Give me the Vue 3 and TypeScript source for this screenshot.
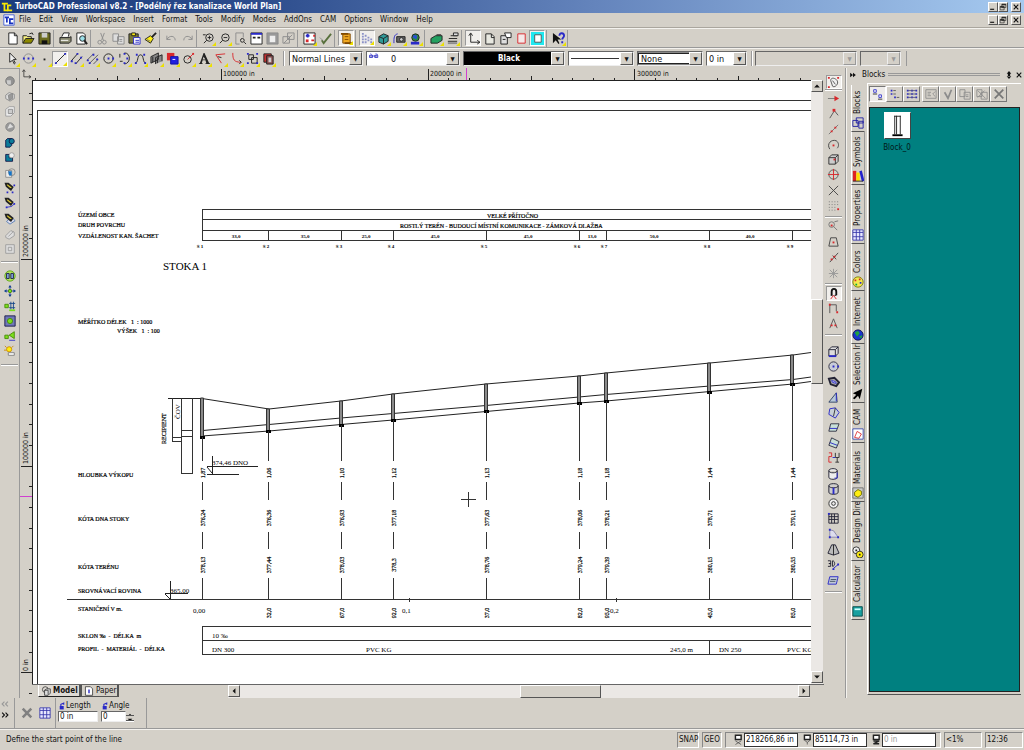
<script setup lang="ts">
import { h, ref } from 'vue'

type Shape = [d: string, stroke: string, fill?: string, width?: number]
interface Tool { id: string; fly?: boolean; on?: boolean }

const K = '#222'
const B = '#2a2ac8'
const R = '#d8282c'
const Y = '#ffee10'
const G = '#8c8c8c'
const T = '#0b7c9a'
const L = '#7be01e'
const N = 'none'

const circle = (x: number, y: number, r: number) =>
  `M${x - r} ${y}a${r} ${r} 0 1 0 ${2 * r} 0a${r} ${r} 0 1 0 ${-2 * r} 0`
const dots = (...p: number[]) => {
  let d = ''
  for (let i = 0; i < p.length; i += 2) d += `M${p[i] - 1} ${p[i + 1] - 1}h2v2h-2z`
  return d
}
const cube = 'M2 5l3-3h7v7l-3 3H2zM2 5h7v7M9 5l3-3'

const icons: Record<string, Shape[]> = {
  logo: [['M1 3h7M4 3v8h4', '#f6e800', N, 2], ['M12 5H8v6h5', '#f6e800', N, 2]],
  doc: [['M1 1h12v12H1z', '#3a58d8', '#fff'], ['M2 4h5M4.500 4v6', '#1730c0', N, 2], ['M12 6H8v5h4', '#1730c0', N, 2]],
  new: [['M3 1h6l3 3v9H3z', K, '#fff'], ['M9 1v3h3', K]],
  open: [['M1 12V4h4l1 1h4v3', K, '#f8f080'], ['M1 12l3-5h9l-3 5z', K, '#8c8800'], ['M8 2l3-1 1 2', K]],
  save: [['M1 1h12v12H1z', K, '#6b6b20'], ['M4 1h6v5H4z', N, '#ccc'], ['M4 9h6v4H4z', N, '#111']],
  print: [['M3 5l2-4h6l-1 4', K, '#fff'], ['M1 6h10l2-1v5l-2 2H1z', K, '#8a8a70'], ['M2 9h8', '#fff']],
  preview: [['M2 1h7l2 2v10H2z', K, '#fff'], [circle(8, 7, 3), K, '#9de0e8'], ['M10 9l3 4', K, N, 2]],
  cut: [['M5 1l3 8M9 1L6 9', G], [circle(4, 11, 2), G], [circle(9, 11, 2), G]],
  copy: [['M1 2h6v8H1zM6 5h7v8H6z', G, '#ddd'], ['M8 8h3M8 10h3', G]],
  paste: [['M1 2h10v10H1z', K, '#77773a'], ['M4 1h4v3H4z', K, Y], ['M6 6h7v7H6z', B, '#fff'], ['M8 9h4M8 11h4', B]],
  brush: [['M13 1L8 6', K, N, 2], ['M7 4l3 3-3 5-6-4z', K, Y], ['M3 8l4 2', '#777']],
  undo: [['M2 4v4h4M2 8c3-5 9-4 9 1', G]],
  redo: [['M12 4v4H8M12 8C9 3 3 4 3 9', G]],
  zin: [[circle(8, 6, 4), K], ['M6 6h4M8 4v4M5 9l-3 3', K], ['M1 3h3', K]],
  zout: [[circle(8, 6, 4), K], ['M6 6h4M5 9l-3 3', K]],
  zwin: [['M10 6V1H2v12h4', G], [circle(9, 9, 2), K], ['M11 11l2 2', K]],
  zext: [['M1 1h12v12H1z', K, '#fff'], ['M1 2h12', B, N, 2], ['M3 6h3M8 6h3', K, N, 2]],
  zpage: [['M1 1h12v12H1z', G, '#999'], ['M4 4h6v7H4z', N, '#eee']],
  zsel: [['M6 1h7v7H6zM1 5h7v7H1z', G], ['M2 12l9-9', G]],
  cam1: [['M1 1h12v12H1z', K, '#fff'], ['M3 4h4M5 2v4', B, N, 2], ['M3 8h3v3H3z', N, R], ['M11 4h2M9 9h3', R, N, 2]],
  pick: [['M3 9l2 3 8-10', '#58703c', N, 2], ['M1 6l3 3', G]],
  scroll: [['M3 2h8v10H3z', '#804800', '#f0a820'], ['M1 2h8M5 12h8', '#804800', N, 2], ['M5 5h4M5 8h4', '#804800']],
  grid: [[dots(2, 2, 5, 4, 8, 6, 2, 5, 2, 8, 5, 8, 8, 9, 2, 11, 5, 11, 11, 8, 11, 11), N, '#8c92c8']],
  box3: [['M2 5l5-3 5 2v6l-5 3-5-2z', K, '#2f9a98'], ['M2 5l5 2 5-3M7 7v6', K]],
  camera: [['M1 12C1 6 1 3 5 2', B], ['M4 5h9v6H4z', K, '#666'], [circle(9, 8, 2), K, '#ccc']],
  globe: [[circle(7, 6, 4), K, '#2a8a3c'], ['M5 3l4 1-1 4-4-2z', N, '#2a50d0'], ['M2 12h9', B, N, 3]],
  render: [['M1 7l5-3h7v5l-5 3H1z', K, '#24a060'], ['M7 3h5', K]],
  stack: [['M2 10h10M3 7h9M5 4h7', K, N, 1], ['M2 12h10', G, N, 2], ['M8 1h5v3H8z', K, '#ddd']],
  axes: [['M4 2v9h9', K], ['M2 4l2-3 2 3M11 9l3 2-3 2', K]],
  sheet: [['M3 2h6l3 3v8H3z', K, '#e8e8e0'], ['M9 2v4h3', K]],
  props: [['M2 4h7v9H2z', K, '#ddd'], ['M6 1h7v5H8z', K, '#fff'], ['M4 8h3', K]],
  redbox: [['M3 2h8v10H3z', R, '#f4e8e8']],
  cyanbox: [['M0 0h14v14H0z', N, '#20e8f0'], ['M4 3h7v8H4z', '#555', '#fff']],
  help: [['M1 1v11l3-3 3 4 1-1-2-4h4z', N, '#111'], ['M8 4c0-4 5-3 5 0 0 2-2 2-2 4M11 10v2', B, N, 2]],
  arrow: [['M4 1v10l3-2 2 4 1-1-2-4h3z', K, '#eee']],
  circ: [[circle(7, 7, 5), G], [dots(2, 7, 7, 7, 12, 7), N, B]],
  point: [[dots(7, 8), N, K]],
  line: [['M2 12L12 2', K], [dots(2, 12, 12, 2), N, B]],
  dline: [['M1 10L8 2M6 13l7-8', K], [dots(2, 10, 8, 2, 6, 12, 12, 6), N, B]],
  mline: [['M1 9l7-7M4 12l9-9M8 13l5-5', '#555'], [dots(2, 9, 8, 3, 12, 8, 4, 12), N, B]],
  ccirc: [[circle(7, 7, 5), K], [dots(7, 7, 12, 7), N, B]],
  arcs: [['M7 1c7 0 7 11 0 12', K], ['M2 2v4M2 10h3', K], [dots(7, 2, 10, 7, 7, 12), N, B]],
  curve: [['M1 12C5 12 3 3 7 3s2 9 6 9', K], [dots(2, 12, 3, 3, 11, 3, 12, 12), N, B]],
  walls: [['M1 12V5l8-4v7zM6 13V6l7-3v7', K, '#888'], ['M3 11V5M8 12V6', K]],
  insert: [['M1 1h8v8H1z', N, R], ['M5 5h8v8H5z', '#1010a0', '#2020e0'], ['M7 8h3', '#fff']],
  dim: [[circle(6, 8, 4), K], ['M6 8l6-6', R], [dots(12, 2), N, R]],
  text: [['M7 1l5 11h1v1H8v-1h1l-1-3H5l-1 3h1v1H1v-1h1L6 1zM6 5L5 8h3z', N, K]],
  corner: [['M12 2L2 3l6 9', R], ['M4 5l4 1', K]],
  fillet: [['M3 1c0 7 1 10 9 10', R], ['M10 9l2 2-2 2', K]],
  group: [['M3 3h5v5H3zM6 6h6v6H6z', K], [dots(2, 2, 12, 2, 2, 12, 12, 12), N, B]],
  bool: [['M2 2h8v9H2z', K, '#c43030'], ['M5 4h7v9H5z', K, '#8a5050'], ['M7 6h3v5H7z', N, '#ccc']],
  g1: [[circle(7, 7, 5), '#777', '#929292'], ['M3 6h5v5H4z', N, '#ccc']],
  g2: [['M2 6l4-3 6 2v5l-5 3-5-3z', '#888', '#ddd'], ['M5 6l5-2v6l-4 2z', '#888', '#999']],
  g3: [['M2 5l4-3h6v7l-4 4H2z', '#999', '#eee'], ['M5 5h5v5H5z', '#888', '#ccc']],
  g4: [[circle(7, 7, 5), '#888', '#999'], ['M4 9l3-6 4 4z', N, '#ddd']],
  add: [['M2 5l2-2h5v8l-2 2H2z', '#114', T], [circle(9, 6, 3), '#114', T]],
  sub: [['M2 4h4v4h4v4H2z', '#114', T], [circle(9, 5, 3), '#999', '#eee']],
  isec: [['M2 4h7v8H2z', '#888', '#eee'], [circle(9, 6, 4), '#888', N], ['M5 5h4v5H6z', N, '#1474c8']],
  pen1: [['M2 2h3l5 4-2 3-5-4z', K, '#d8c430', 2], [dots(12, 4, 4, 12, 10, 12), N, B]],
  pen2: [['M2 2h3l5 4-2 3-5-4z', K, '#d8c430', 2], ['M3 12l6-1 3-3', B], [dots(3, 12, 12, 8), N, B]],
  pen3: [['M5 8l-2 2 4 3 6-4-4-4', '#5078b0', '#dde'], ['M2 2h3l5 4-2 3-5-4z', K, '#d8c430', 2]],
  shade: [['M2 9l6-6 4 2v4l-6 4-4-2zM5 10l6-6', '#999', '#ddd']],
  off: [['M2 2h10v10H2zM5 5h4v4H5z', '#999', '#ddd']],
  n1: [[circle(7, 7, 6), '#58a010', '#b8e860'], ['M3 4h3v6H3zM8 4h3v6H8z', '#114', '#88a8e0']],
  n2: [['M7 1v12M1 7h12', B], ['M7 0l2 3H5zM7 14l2-3H5zM0 7l3-2v4zM14 7l-3-2v4z', N, '#148'], [circle(7, 7, 2), '#480', L]],
  n3: [['M6 4h7M6 9h7M8 2v9M11 2v9', '#148'], ['M1 5h4v4H1z', '#480', L], ['M6 12h7', L, N, 2]],
  n4: [['M1 1h12v12H1z', '#114', '#7078b8'], [circle(7, 7, 3), '#480', L]],
  n5: [['M1 6h4v4H1zM6 6l6-4v8z', '#480', L], ['M6 12h7', B, N, 1]],
  n6: [[circle(6, 5, 3), '#c80', Y], ['M1 1l2 2M11 1L9 3M0 6h3', '#c80'], ['M5 9h7v3H5z', '#777', '#fff']],
  nosnap: [['M4 5c0-4 5-3 7 0 2 4-3 8-5 6z', '#555', '#eee'], ['M6 5l3 4', '#555'], [dots(2, 2, 12, 2, 2, 12), N, R]],
  snap1: [['M1 7h9', '#777'], ['M8 4l5 3-5 3z', N, R]],
  snap2: [['M3 12L8 4l4 5', '#555'], ['M6 2h3v3H6z', N, R]],
  snap3: [['M2 12L12 2', '#777'], [dots(5, 9, 9, 5), N, R]],
  snap4: [['M3 12C-1 6 5 1 10 3c3 2 3 6 1 8', '#444'], [dots(7, 8), N, R]],
  snap5: [[cube, '#333', '#ccc'], [dots(8, 7), N, R]],
  snap6: [[circle(7, 7, 5), '#555'], ['M7 1v12M1 7h12', R]],
  snap7: [['M2 2l10 10M12 2L2 12', '#444']],
  snap8: [['M2 3h1M5 3h1M8 3h1M11 3h1M2 6h1M5 6h1M8 6h1M11 6h1M2 9h1M5 9h1M8 9h1M2 12h1M5 12h1M8 12h1', '#777'], [dots(12, 11), N, R]],
  snap9: [[circle(5, 6, 3), '#777'], ['M7 8l4 4M8 3l4-1', '#777'], [dots(5, 7), N, R]],
  snap10: [['M4 3h6l2 9H2z', '#444'], [dots(7, 8), N, R]],
  snap11: [['M3 12L12 2M6 5l4 4', '#444'], [dots(5, 9, 8, 6), N, R]],
  snap12: [['M7 2v10M2 7h10M3 3l8 8M11 3l-8 8', '#999']],
  magnet: [['M4 9h2M8 9h2', '#111', N, 1], ['M5 9V5c0-4 5-4 5 0v4', '#111', N, 2], ['M7 9l-3 4M7 9l3 4', R]],
  ort: [['M3 2v10M3 3h7v7', '#555'], [dots(3, 3, 11, 11), N, R]],
  comp: [['M7 2L3 12M7 2l4 10', '#555'], [dots(5, 9, 9, 9), N, R]],
  box: [[cube, '#223', '#ddd'], ['M2 12h8', B, N, 2]],
  sphere: [[circle(7, 7, 5), '#334', '#c8ccd8'], [dots(7, 7, 12, 7), N, B]],
  torus: [['M2 4l6-1 5 5-3 4-6-2z', '#223', '#aaa', 2], ['M5 6l4 1 1 2-4-1z', B, '#fff']],
  cone: [['M10 2L2 12h9z', '#346', '#b8c8d8'], ['M10 2v9', B]],
  poly: [['M3 3l6-1 4 5-4 6-7-4z', B, '#c8d0d8'], ['M9 2L7 11', '#333']],
  ext: [['M4 3h9L10 11H2z', '#334', '#c8e0d8'], ['M3 8h8', B]],
  ext2: [['M5 2l8 4-3 7-8-3z', '#334', '#c8e0d8'], ['M3 7l8 3', B]],
  lathe: [['M2 2h3v4H2v6h3', R], ['M9 2v5M13 2v5H9M11 7v5M9 12h4', '#333'], ['M6 7h3', B]],
  cyl: [['M2 4c0-3 9-3 9 0v7c0 3-9 3-9 0zM2 4c0 3 9 3 9 0', '#223', '#eee'], ['M11 6v6H8', B]],
  cyl2: [['M2 4c0-3 10-3 10 0v7c0 3-10 3-10 0zM2 4c0 3 10 3 10 0', '#223', '#ccc'], ['M7 6v7', B, N, 2]],
  ring: [[circle(7, 7, 5), '#333', '#eee'], [circle(7, 7, 2), '#333']],
  mesh: [['M2 2h10v10H2zM2 5h10M2 8h10M5 2v10M8 2v10', '#223'], [dots(2, 2), N, B]],
  tri: [['M3 3v8h9L7 4z', '#88a', '#dde'], [dots(3, 3, 3, 11, 12, 11), N, B]],
  prism: [['M5 2h4l4 9-6 2-6-2z', '#223', '#bbb'], ['M7 2v11', K]],
  threeD: [['M1 3h3v3H2h2v3H1M6 3v6c3 0 3-6 0-6', '#223'], ['M6 12l6-5', B], [dots(12, 7, 7, 12), N, B]],
  last: [['M3 4h9l-2 8H1z', B, '#c0c8d8'], ['M4 7h6M3 9h6', '#456']],
  blocks: [['M1 4h6v7H1zM5 1h8v6H5zM8 5h5v8H8z', '#1818a0', N]],
  symbols: [['M1 1h4v12H1z', N, '#d22'], ['M5 3h4v10H5z', N, '#fd0'], ['M10 1l3 12', '#22c', N, 3], ['M1 13h12', K]],
  table: [['M1 1h12v12H1zM1 4h12M5 1v12M9 1v12M1 9h12', '#3434a8', '#e8e8ff']],
  palette: [[circle(7, 7, 6), '#770', '#f4e850'], [dots(4, 5, 9, 4), N, R], [dots(5, 10), N, '#0a4'], [dots(10, 8), N, B]],
  earth: [[circle(7, 7, 6), '#114', '#1834d0'], ['M3 4l4-2 2 3-3 4zM8 9l4-2-1 4z', N, '#20a040']],
  cursor: [['M12 1L1 6l4 2-4 4 2 1 4-4 2 4z', N, '#000']],
  camtab: [['M1 1h12v12H1z', '#34a', '#fff'], ['M3 11l3-7 5 3-3 5z', R]],
  mat: [['M1 1h12v12H1z', '#666', '#ccc'], ['M3 6l4-3 4 2v4l-4 3-4-2z', '#660', Y]],
  design: [[circle(5, 5, 4), K, '#eee'], [circle(9, 10, 4), K, Y], [dots(5, 5, 9, 10), N, K]],
  calc: [['M1 2h11v11H1z', '#044', '#18a0a0'], ['M3 4h7v2H3z', N, '#cff']],
  bv1: [['M2 2h3v3H2zM8 8h3v3H8z', B, '#fff'], ['M1 7h5M7 13h5', K]],
  bv2: [[dots(3, 3, 3, 7, 7, 11), N, B], ['M5 3h3M5 7h3M9 11h3', '#555']],
  bv3: [[dots(2, 3, 7, 3, 12, 3, 2, 7, 7, 7, 12, 7, 2, 11, 7, 11, 12, 11), N, B], ['M2 3h10M2 7h10M2 11h10', '#558']],
  bb1: [['M1 2h12v10H1zM3 5h4M3 7h3M3 9h4M12 4L9 7l3 3', G]],
  bb2: [['M3 5l4 7 4-10', G, N, 2]],
  bb3: [['M1 2h6v8H1zM6 5h7v8H6zM8 8h3M8 10h3', G]],
  bb4: [['M1 2h6v8H1zM6 5h7v8H6z', G], ['M2 3l9 9M10 3l-8 8', G, N, 1]],
  bb5: [['M2 2l10 10M12 2L2 12', '#777', N, 2]],
  cross: [['M2 2l10 10M12 2L2 12', '#808080', N, 3]],
  lock: [['M3 7h7v6H3z', N, B], ['M5 8V4l5-2v3', B, N, 2]],
  model: [[circle(6, 5, 4), K], ['M5 6l3-2h5v6l-3 3H5z', K, '#ddd'], ['M5 6h5v6', K]],
  paper: [['M2 1h7l3 3v9H2z', K, '#fff'], ['M7 5v5', B, N, 2]],
  min: [['M2 11h7', '#111', N, 2]],
  rest: [['M5 2h7v6H5zM2 6h7v6H2z', '#111', '#d4d0c8'], ['M5 3h7M2 7h7', '#111', N, 2]],
  close: [['M3 3l8 8M11 3l-8 8', '#111', N, 2]],
  up: [['M3 9l4-4 4 4z', N, '#111']],
  down: [['M3 5l4 4 4-4z', N, '#111']],
  left: [['M9 3L5 7l4 4z', N, '#111']],
  right: [['M5 3l4 4-4 4z', N, '#111']],
  dright: [['M2 3l5 4-5 4zM7 3l5 4-5 4z', N, '#111']],
  updown: [['M7 0l4 5H3zM7 14l4-5H3zM5 4h4v6H5z', N, '#111']],
  chr: [['M2 3l4 4-4 4M8 3l4 4-4 4', '#111', N, 2]],
  chl: [['M6 3L2 7l4 4M12 3L8 7l4 4', '#999', N, 2]],
  px: [['M2 1h8v6H2z', K, '#fff', 2], ['M2 9l8 5M10 9l-8 5', '#444']],
  py: [['M2 1h8v6H2z', K, '#fff', 2], ['M2 8l4 3 4-3M6 11v3', '#444']],
  pz: [['M2 1h8v6H2z', K, '#fff', 2], ['M2 9h8l-8 4h8', K, N, 2]],
}

const Icon = (p: { name: string }) =>
  h('svg', { class: 'ico', viewBox: '0 0 14 14', 'aria-hidden': 'true' },
    icons[p.name].map(([d, stroke, fill, width]) =>
      h('path', { d, stroke, fill: fill ?? N, 'stroke-width': width ?? 1 })))
Icon.props = ['name']

const parse = (s: string): Tool[] =>
  s.split(' ').map(t => ({ id: t.replace(/[+!]/g, ''), fly: t.includes('+'), on: t.includes('!') }))

const menus = ['File', 'Edit', 'View', 'Workspace', 'Insert', 'Format', 'Tools', 'Modify', 'Modes', 'AddOns', 'CAM', 'Options', 'Window', 'Help']
const standard = [
  'new open save', 'print preview', 'cut copy paste brush', 'undo redo', 'zin+ zout+ zwin zext zpage zsel',
  'cam1+ pick', 'scroll+!', 'grid+! box3+ camera+ globe+', 'render+ stack+', 'axes! sheet props redbox cyanbox!', 'help+',
].map(parse)
const drawing = parse('arrow+ circ+ point+ line+! dline+ mline+ ccirc+ arcs+ curve+ walls+ insert+ dim+ text+ corner+ fillet+ group+ bool+')
const leftTools = ['g1 g2 g3 g4 add sub isec pen1 pen2 pen3 shade off', 'n1 n2 n3 n4 n5 n6'].map(parse)
const snapTools = [
  'nosnap!', 'snap1 snap2 snap3 snap4 snap5 snap6 snap7 snap8', 'snap9 snap10 snap11 snap12', 'magnet! ort comp',
  'box sphere torus cone poly ext ext2 lathe cyl cyl2 ring mesh tri prism threeD last',
].map(parse)
const blockTools = ['bv1! bv2 bv3', 'bb1 bb2 bb3 bb4 bb5'].map(parse)
const tabs = [
  ['Blocks', 'blocks', 's'], ['Symbols', 'symbols', 'm'], ['Properties', 'table', 'l'], ['Colors', 'palette', 's'],
  ['Internet', 'earth', 'm'], ['Selection Ir', 'cursor', 'l'], ['CAM', 'camtab', 'xs'], ['Materials', 'mat', 'l'],
  ['Design Dire', 'design', 'l'], ['Calculator', 'calc', 'l'],
]

const lineStyle = ref('Normal Lines')
const length = ref('0 in')
const angle = ref('0')
const posX = ref('218266,86 in')
const posY = ref('85114,73 in')
const posZ = ref('0 in')

const step = 20.68
const hTicks = Array.from({ length: 38 }, (_, i) => ({ x: Math.round(14.6 + i * step), i }))
const vTicks = Array.from({ length: 30 }, (_, i) => ({ y: Math.round(13.4 + i * step), i }))

const shafts = [
  { x: 202, top: 398, bot: 437, v: ['1,87', '376,24', '378,13', ''] },
  { x: 268, top: 409, bot: 431, v: ['1,06', '376,36', '377,44', '32,0'] },
  { x: 341, top: 401, bot: 425, v: ['1,10', '376,93', '378,03', '67,0'] },
  { x: 393, top: 394, bot: 420, v: ['1,12', '377,18', '378,3', '92,0'] },
  { x: 486, top: 384, bot: 411, v: ['1,13', '377,63', '378,76', '37,0'] },
  { x: 579, top: 376, bot: 403, v: ['1,18', '378,06', '379,24', '82,0'] },
  { x: 606, top: 373, bot: 401, v: ['1,18', '378,21', '379,39', '95,0'] },
  { x: 709, top: 363, bot: 392, v: ['1,44', '378,71', '380,15', '45,0'] },
  { x: 792, top: 355, bot: 384, v: ['1,44', '379,11', '380,55', '85,0'] },
]
const rowsY = [473, 518, 565, 613]
const spans: [number, string][] = [[236, '33,0'], [305, '35,0'], [366, '25,0'], [435, '45,0'], [528, '45,0'], [592, '13,0'], [654, '50,0'], [750, '40,0']]
const labels: [number, number, string][] = [
  [78, 217, 'ÚZEMÍ OBCE'], [78, 227, 'DRUH POVRCHU'], [78, 238, 'VZDÁLENOST KAN. ŠACHET'],
  [78, 324, 'MĚŘÍTKO DÉLEK   1  : 1000'], [117, 333, 'VÝŠEK   1  : 100'],
  [78, 477, 'HLOUBKA VÝKOPU'], [78, 521, 'KÓTA DNA STOKY'], [78, 569, 'KÓTA TERÉNU'],
  [78, 593, 'SROVNÁVACÍ ROVINA'], [78, 611, 'STANIČENÍ V m.'], [78, 638, 'SKLON ‰  -  DÉLKA  m'],
  [78, 651, 'PROFIL  -  MATERIÁL  -  DÉLKA'], [487, 218, 'VELKÉ PŘÍTOČNO'],
  [400, 228, 'ROSTLÝ TERÉN - BUDOUCÍ MÍSTNÍ KOMUNIKACE - ZÁMKOVÁ DLAŽBA'],
]
const notes: [number, number, string][] = [
  [212, 465, '374,46 DNO'], [170, 593, '365,00'], [193, 613, '0,00'], [402, 613, '0,1'], [610, 613, '0,2'],
  [212, 638, '10 ‰'], [212, 652, 'DN 300'], [366, 652, 'PVC KG'], [670, 652, '245,0 m'], [719, 652, 'DN 250'], [787, 652, 'PVC KG'],
]
</script>

<template>
  <div class="app">
    <header class="title">
      <Icon name="logo" />
      <h1>TurboCAD Professional v8.2 - [Podélný řez kanalizace World Plan]</h1>
      <div class="winbtns">
        <button v-for="b in ['min', 'rest', 'close']" :key="b" :class="['wb', b]" :aria-label="b"><Icon :name="b" /></button>
      </div>
    </header>

    <nav class="menu">
      <Icon name="doc" />
      <button v-for="m in menus" :key="m">{{ m }}</button>
      <div class="winbtns">
        <button v-for="b in ['min', 'rest', 'close']" :key="b" :class="['wb', b]" :aria-label="'document ' + b"><Icon :name="b" /></button>
      </div>
    </nav>

    <div class="bar std">
      <div v-for="(g, i) in standard" :key="i" class="group">
        <button v-for="t in g" :key="t.id" :class="['tool', { on: t.on, fly: t.fly }]" :aria-label="t.id"><Icon :name="t.id" /></button>
      </div>
    </div>

    <div class="bar props">
      <div class="group">
        <button v-for="t in drawing" :key="t.id" :class="['tool', { on: t.on, fly: t.fly }]" :aria-label="t.id"><Icon :name="t.id" /></button>
      </div>
      <div class="combos">
        <span class="combo w1"><select v-model="lineStyle" aria-label="Line style"><option>Normal Lines</option></select></span>
        <span class="combo w2"><svg class="specs" viewBox="0 0 14 8" aria-hidden="true"><path d="M1 3h4v3H1zM8 3h4v3H8zM4 4h5M2 1l2 1M9 1l3 1" /></svg><select aria-label="Layer"><option>0</option></select></span>
        <span class="combo w3 black"><select aria-label="Color"><option>Black</option></select></span>
        <span class="combo w4"><i class="rule"></i><select aria-label="Line pattern"><option></option></select></span>
        <span class="combo w4 framed"><select aria-label="Brush"><option>None</option></select></span>
        <span class="combo w5"><select aria-label="Line width"><option>0 in</option></select></span>
      </div>
      <div class="combos last">
        <span class="combo w3 off"><select disabled aria-label="Font"><option></option></select></span>
        <span class="combo w5 off"><select disabled aria-label="Font size"><option></option></select></span>
      </div>
    </div>

    <main class="work">
      <aside class="left">
        <div v-for="(g, i) in leftTools" :key="i" :class="['vgroup', 'n' + g.length]">
          <button v-for="t in g" :key="t.id" class="tool" :aria-label="t.id"><Icon :name="t.id" /></button>
        </div>
      </aside>

      <section class="doc">
        <div class="corner"><Icon name="axes" /></div>
        <svg class="hruler" aria-label="Horizontal ruler">
          <path v-for="t in hTicks" :key="t.i" :d="`M${t.x - 11.5} ${t.i % 10 === 9 ? 1 : t.i % 10 === 4 ? 8 : 10}V12`" />
          <path class="mark" d="M434.500 0v12" />
          <text x="191" y="8">100000 in</text>
          <text x="398" y="8">200000 in</text>
          <text x="605" y="8">300000 in</text>
        </svg>
        <svg class="vruler" aria-label="Vertical ruler">
          <path v-for="t in vTicks" :key="t.i" :d="`M${t.i % 10 === 8 ? 1 : 9} ${t.y + .5}H12`" />
          <path class="mark" d="M0 416.500h12" />
          <text transform="translate(8 177) rotate(-90)">200000 in</text>
          <text transform="translate(8 384) rotate(-90)">100000 in</text>
          <text transform="translate(8 591) rotate(-90)">0 in</text>
        </svg>

        <svg class="canvas" role="img" aria-label="Podélný řez kanalizace">
          <g transform="translate(-33 -81)">
            <path class="ln" d="M32 100.500H1600M37.500 2000V110.500H1600" />
            <path class="ln" d="M1600 209.500H202.500V240.500H1600M202 219.500H1600M202 230.500H1600" />
            <path v-for="s in shafts" :key="'t' + s.x" class="ln" :d="`M${s.x + .5} 230V240`" />
            <text v-for="[x, y, t] in labels" :key="t" :x="x" :y="y" class="t6">{{ t }}</text>
            <text v-for="[x, t] in spans" :key="x" :x="x" y="238" class="t5 mid">{{ t }}</text>
            <text v-for="(s, i) in shafts" :key="'s' + i" :x="s.x - 2" y="248" class="t5 mid">Š {{ i + 1 }}</text>
            <text x="163" y="270" class="t11">STOKA 1</text>
            <text v-for="[x, y, t] in notes" :key="x + t" :x="x" :y="y" class="t7">{{ t }}</text>

            <path class="soft" d="M168 398.500H202L269 409 341 401 393 394 486 384 579 376 606 373 710 363 793 355 811 352.500" />
            <path class="soft" d="M203 430.500L269 424.500 341 418 393 413.500 486 405.500 579 397 606 394.500 710 386 793 379.500 811 377" />
            <path class="soft" d="M202 436L269 431 341 424.500 393 420 486 411.500 579 403 606 401 710 391.500 793 384 811 381.500" />
            <path class="ln" d="M172.500 398v44M181.500 398v75H192.500V398M182 430.500h10M182 436.500h10M172 437.500h10M172 441.500h10" />
            <path class="soft" d="M212.500 456v18M207 466.500h51M207 474.500h32M207 467l5 6M170.500 581v19M165 593.500h23M165 594l5 5" />
            <text transform="translate(166 444) rotate(-90)" class="t6">RECIPIENT</text>
            <text transform="translate(180 419) rotate(-90)" class="t7">ČOV</text>

            <g v-for="s in shafts" :key="s.x">
              <path class="shaft" :d="`M${s.x - 1.5} ${s.top}h3V${s.bot}h-3z`" />
              <path class="cap" :d="`M${s.x - 2} ${s.bot - 1}h5v3h-5z`" />
              <path class="ln" :d="`M${s.x + .5} ${s.bot}V461M${s.x + .5} 482v18M${s.x + .5} 532v17M${s.x + .5} 578v22`" />
              <text v-for="(v, i) in s.v" :key="i" :transform="`translate(${s.x + 3} ${rowsY[i]}) rotate(-90)`" class="t6 mid">{{ v }}</text>
            </g>
            <path class="ln" d="M67 599.500H1600M409.500 598v4M616.500 598v4" />
            <path class="ln" d="M1600 626.500H202.500V654.500H1600M202 640.500H1600M709.500 640v14" />
            <path class="ln" d="M461 499.500h15M468.500 492v15" />
          </g>
        </svg>

        <div class="vscroll">
          <button class="sb" aria-label="Scroll up"><Icon name="up" /></button>
          <span class="before"></span><span class="thumb"></span><span class="after"></span>
          <button class="sb" aria-label="Scroll down"><Icon name="down" /></button>
        </div>

        <div class="sheets">
          <button class="sheet active"><Icon name="model" />Model</button>
          <button class="sheet"><Icon name="paper" />Paper</button>
          <span class="fill"></span>
          <div class="hscroll">
            <button class="sb" aria-label="Scroll left"><Icon name="left" /></button>
            <span class="before"></span><span class="thumb"></span><span class="after"></span>
            <button class="sb" aria-label="Scroll right"><Icon name="right" /></button>
          </div>
        </div>
      </section>

      <aside class="snaps">
        <div v-for="(g, i) in snapTools" :key="i" :class="['vgroup', 'n' + g.length]">
          <button v-for="t in g" :key="t.id" :class="['tool', { on: t.on }]" :aria-label="t.id"><Icon :name="t.id" /></button>
        </div>
      </aside>

      <aside class="panel">
        <div class="phead">
          <button aria-label="Collapse"><Icon name="dright" /></button>
          <h2>Blocks</h2>
          <span class="grip"></span>
          <button aria-label="Resize"><Icon name="updown" /></button>
          <button aria-label="Close panel"><Icon name="close" /></button>
        </div>
        <div class="pbody">
          <div class="tabs">
            <button v-for="([name, icon, size], i) in tabs" :key="name" :class="['tab', size, { active: i === 0 }]"><Icon :name="icon" /><span>{{ name }}</span></button>
          </div>
          <div class="page">
            <div class="ptools">
              <div v-for="(g, i) in blockTools" :key="i" class="group">
                <button v-for="t in g" :key="t.id" :class="['raised', { on: t.on }]" :aria-label="t.id"><Icon :name="t.id" /></button>
              </div>
            </div>
            <div class="list">
              <figure>
                <svg viewBox="0 0 27 27" aria-hidden="true"><path d="M10.500 3v20M12.500 3v20M16.500 3v20M10 3.500h7" /><path d="M8 23h11v2H8z" class="base" /></svg>
                <figcaption>Block_0</figcaption>
              </figure>
            </div>
          </div>
        </div>
      </aside>
    </main>

    <div class="inspector">
      <div class="chev"><Icon name="chl" /><Icon name="chr" /></div>
      <div class="acts">
        <button aria-label="Cancel"><Icon name="cross" /></button>
        <button aria-label="Table"><Icon name="table" /></button>
      </div>
      <div class="fields">
        <div class="field"><label for="len"><Icon name="lock" />Length</label><input id="len" v-model="length" /></div>
        <div class="field angle">
          <label for="ang"><Icon name="lock" />Angle</label>
          <div class="spin"><input id="ang" v-model="angle" /><span><button aria-label="Increase"><Icon name="up" /></button><button aria-label="Decrease"><Icon name="down" /></button></span></div>
        </div>
      </div>
    </div>

    <footer class="status">
      <p>Define the start point of the line</p>
      <button class="cell snap">SNAP</button>
      <button class="cell geo">GEO</button>
      <div class="cell coords">
        <label><Icon name="px" /><input v-model="posX" aria-label="X" /></label>
        <label><Icon name="py" /><input v-model="posY" aria-label="Y" /></label>
        <label><Icon name="pz" /><input v-model="posZ" aria-label="Z" disabled /></label>
      </div>
      <span class="cell load">&lt;1%</span>
      <span class="cell time">12:36</span>
    </footer>
  </div>
</template>

<style>
body { background: #d4d0c8; overflow: hidden; }
.ico { width: 12px; height: 12px; display: block; flex: none; }
</style>

<style scoped>
* { box-sizing: border-box; }
.app {
  height: 100vh; display: flex; flex-direction: column; background: #d4d0c8; color: #111;
  font: 8px/10px "DejaVu Sans Condensed", "Open Sans", sans-serif; overflow: hidden;
}
button, input, select { font: inherit; color: inherit; margin: 0; padding: 0; border: 0; background: none; border-radius: 0; min-width: 0; outline: 0; }
h1, h2, p, figure { margin: 0; font-size: inherit; font-weight: normal; }

.title { flex: none; height: 13px; display: flex; align-items: center; gap: 2px; padding: 0 3px 0 1px; background: linear-gradient(90deg, #1c3c7c, #2c4c8c 25%, #6484bc 58%, #a6caf0); color: #fff; }
.title h1 { font-size: 8px; font-weight: bold; flex: 1; white-space: nowrap; }
.winbtns { display: flex; margin-left: auto; }
.wb { width: 10px; height: 10px; display: grid; place-items: center; background: #d4d0c8; border: 1px solid; border-color: #fff #555 #555 #fff; }
.wb.close { margin-left: 3px; }
.wb .ico { width: 8px; height: 8px; }
.menu { flex: none; height: 15px; display: flex; align-items: center; padding: 0 3px; border-bottom: 1px solid #aaa69e; }
.menu > button { padding: 0 4px; }

.bar { flex: none; height: 20px; display: flex; align-items: center; border-top: 1px solid #f4f2ee; border-bottom: 1px solid #999; padding-left: 4px; }
.bar .ico { width: 13px; height: 13px; }
.std .group { border-right: 1px solid #999; padding-right: 1px; margin-right: 3px; }
.group { display: flex; align-items: center; height: 17px; }
.tool { position: relative; width: 16px; height: 16px; display: grid; place-items: center; }
.tool.on { background: #f1efec; border: 1px solid; border-color: #999 #fff #fff #999; }
.fly::after { content: ""; position: absolute; right: 0; bottom: 0; border: 2px solid; border-color: transparent #ece000 #ece000 transparent; }
.props { border-bottom: 0; }
.combos { display: flex; gap: 3px; border-left: 1px solid #999; box-shadow: inset 1px 0 #fff; margin-left: 7px; padding-left: 5px; }
.combos.last { margin-left: 4px; padding: 0 5px 0 3px; border-right: 1px solid #999; }
.combo { position: relative; height: 15px; display: flex; align-items: center; background: #fff; border: 1px solid; border-color: #666 #eee #eee #666; }
.combo::after { content: "▼"; position: absolute; right: 0; top: 0; bottom: 0; width: 11px; background: #d4d0c8; border: 1px solid; border-color: #fff #555 #555 #fff; font-size: 6px; line-height: 11px; text-align: center; pointer-events: none; }
.combo select { appearance: none; width: 100%; height: 13px; padding: 0 12px 0 2px; font-size: 9px; }
.w1 { width: 74px; } .w2 { width: 94px; } .w3 { width: 102px; } .w4 { width: 66px; } .w5 { width: 41px; }
.w2 select { padding-left: 24px; }
.specs { position: absolute; left: 1px; top: 1px; width: 12px; height: 6px; fill: #aac; stroke: #2a2ac8; }
.black select { background: #000; color: #fff; font-weight: bold; text-align: center; text-align-last: center; font-size: 8px; }
.rule { position: absolute; left: 2px; right: 14px; top: 6px; border-top: 1px solid #333; }
.framed { background: #888; }
.framed select { background: #fff; border: 1px solid #222; width: 54px; height: 11px; }
.off { background: #d4d0c8; }
.off::after { color: #999; border-color: #eee #999 #999 #eee; }

.work { flex: 1; min-height: 0; display: flex; }
.left { width: 20px; border-right: 1px solid #999; border-top: 1px solid #999; padding: 4px 1px 0; }
.vgroup { display: grid; grid-auto-rows: 1fr; justify-items: center; align-items: center; border-bottom: 1px solid #999; box-shadow: 0 1px #fff; }
.vgroup .tool { height: 15px; }
.left .n12 { height: 189px; padding-bottom: 4px; }
.left .n6 { height: 103px; padding: 6px 0 5px; }

.doc { flex: 1; min-width: 0; display: grid; grid-template: 12px minmax(0, 1fr) 14px / 12px minmax(0, 1fr) 13px; }
.corner .ico { width: 10px; height: 10px; margin: 1px 0 0 1px; }
.hruler { grid-column: 2 / 4; width: 100%; height: 12px; }
.vruler { grid-row: 2 / 4; width: 12px; height: 100%; }
.hruler path, .vruler path { stroke: #222; }
.hruler .mark, .vruler .mark { stroke: #d040d0; }
.hruler text, .vruler text { font-size: 7px; fill: #111; }
.canvas { width: 100%; height: 100%; background: #fff; border: 1px solid #222; border-width: 1px 0 0 1px; overflow: hidden; }
.ln { fill: none; stroke: #333; shape-rendering: crispEdges; }
.soft { fill: none; stroke: #222; stroke-width: 1; }
.shaft { fill: #8a8a8a; stroke: #333; }
.cap { fill: #000; }
.canvas text { font-family: "Liberation Serif", serif; fill: #000; white-space: pre; }
.t5 { font-size: 5px; font-weight: bold; }
.t6 { font-size: 6px; stroke: #000; stroke-width: .2px; }
.t7 { font-size: 7px; }
.t11 { font-size: 11px; }
.mid { text-anchor: middle; }

.vscroll, .hscroll { display: flex; background: #ebe8e5; }
.vscroll { flex-direction: column; padding-bottom: 1px; margin-right: 1px; }
.sb { flex: none; width: 12px; height: 12px; display: grid; place-items: center; background: #d4d0c8; border: 1px solid; border-color: #fff #555 #555 #fff; }
.sb .ico { width: 10px; height: 10px; }
.thumb { background: #d4d0c8; border: 1px solid; border-color: #fff #555 #555 #fff; }
.vscroll .thumb { flex: 83; } .vscroll .before { flex: 208; } .vscroll .after { flex: 289; }
.hscroll .thumb { flex: 79; } .hscroll .before { flex: 281; } .hscroll .after { flex: 198; }
.sheets { grid-column: 2 / 4; display: flex; min-width: 0; border-top: 1px solid #666; padding: 0 14px 0 6px; }
.sheet { display: flex; align-items: center; gap: 2px; height: 12px; width: 38px; padding: 0 2px; border: 1px solid #555; border-width: 0 2px 1px 1px; }
.sheet.active { width: 43px; border-left-color: #fff; border-bottom-color: #222; background: #dedad4; font-weight: 600; }
.sheet .ico { width: 10px; height: 10px; }
.fill { width: 109px; flex: none; }
.hscroll { flex: 1; }

.snaps { width: 22px; border-right: 1px solid #999; padding: 6px 3px 0 1px; }
.n1 { height: 16px; }
.n1 .tool { height: 14px; }
.n8 { height: 127px; padding: 1px 0 3px; }
.n4 { height: 67px; padding-bottom: 2px; }
.n3 { height: 51px; padding: 2px 0 3px; }
.n16 { height: 257px; padding: 8px 0 4px; border-top: 1px solid #fff; }
.snaps .ico { width: 13px; height: 13px; }

.panel { width: 178px; display: flex; flex-direction: column; border-left: 1px solid #f4f2ee; }
.phead { height: 13px; display: flex; align-items: center; padding: 0 1px 0 2px; gap: 2px; }
.phead h2 { margin: 0 1px 0 3px; }
.phead .ico { width: 8px; height: 8px; }
.grip { flex: 1; height: 3px; border: 1px solid #999; border-width: 1px 0; margin-right: 3px; }
.pbody { flex: 1; min-height: 0; display: flex; }
.tabs { width: 20px; padding: 4px 0 0 4px; display: flex; flex-direction: column; }
.tab { writing-mode: vertical-rl; transform: rotate(180deg); width: 14px; display: flex; align-items: center; gap: 3px; padding-top: 2px; overflow: hidden; white-space: nowrap; border: solid #555; border-width: 1px 1px 0 0; border-right-color: #fff; border-left: 1px solid #999; }
.tab .ico { transform: rotate(180deg); }
.tab.active { border-left-color: #d4d0c8; }
.xs { height: 40px; } .s { height: 47px; } .m { height: 53px; } .l { height: 59px; }
.page { flex: 1; display: flex; flex-direction: column; border-left: 1px solid #fff; border-top: 1px solid #fff; margin: 2px 3px 3px 0; padding: 1px 1px 2px; border-bottom: 1px solid #555; }
.ptools { display: flex; gap: 2px; height: 22px; }
.raised { width: 17px; height: 16px; display: grid; place-items: center; border: 1px solid; border-color: #fff #777 #777 #fff; }
.raised.on { background: #eeecea; border-color: #777 #fff #fff #777; }
.list { flex: 1; background: #008080; border: 1px solid #222; padding: 4px 0 0 13px; color: #001818; }
figure { width: 28px; display: flex; flex-direction: column; align-items: center; gap: 4px; }
figure svg { width: 27px; height: 27px; background: #fff; border: 1px solid; border-color: #fff #444 #444 #fff; fill: none; stroke: #222; }
.base { fill: #000; stroke: none; }

.inspector { flex: none; height: 31px; display: flex; border-bottom: 1px solid #999; }
.chev { width: 15px; padding: 2px 1px 0; border-right: 1px solid #999; display: flex; flex-direction: column; gap: 3px; }
.chev .ico { width: 8px; height: 8px; }
.acts { display: flex; align-items: center; gap: 6px; width: 41px; padding-left: 6px; border-right: 1px solid #999; }
.fields { display: flex; gap: 3px; padding: 3px 12px 0 2px; border-right: 1px solid #999; }
.field { width: 40px; }
.angle { width: 33px; }
label { display: flex; align-items: center; }
.field label { height: 10px; white-space: nowrap; }
.field .ico { width: 8px; height: 8px; }
.field input { display: block; width: 100%; height: 11px; background: #fff; border: 1px solid; border-color: #666 #eee #eee #666; padding: 0 1px; }
.spin { display: flex; background: #fff; }
.spin > span { display: flex; flex-direction: column; }
.spin button { width: 8px; height: 5px; display: grid; place-items: center; background: #d4d0c8; border-bottom: 1px solid #555; overflow: hidden; }

.status { flex: none; height: 21px; display: flex; align-items: center; gap: 3px; padding: 0 1px 1px 6px; border-top: 1px solid #f4f2ee; }
.status p { flex: 1; }
.cell { height: 16px; display: flex; align-items: center; border: 1px solid; border-color: #888 #fff #fff #888; padding-left: 1px; white-space: nowrap; }
.snap { width: 22px; } .geo { width: 20px; } .load { width: 38px; } .time { width: 38px; }
.coords { width: 216px; gap: 4px; padding: 0 4px 0 8px; justify-content: space-between; }
.coords input { width: 54px; height: 14px; background: #fff; border: 1px solid #333; padding: 0 1px; font-size: 8px; }
.coords input:disabled { color: #999; }
.coords .ico { width: 10px; height: 13px; }
</style>
